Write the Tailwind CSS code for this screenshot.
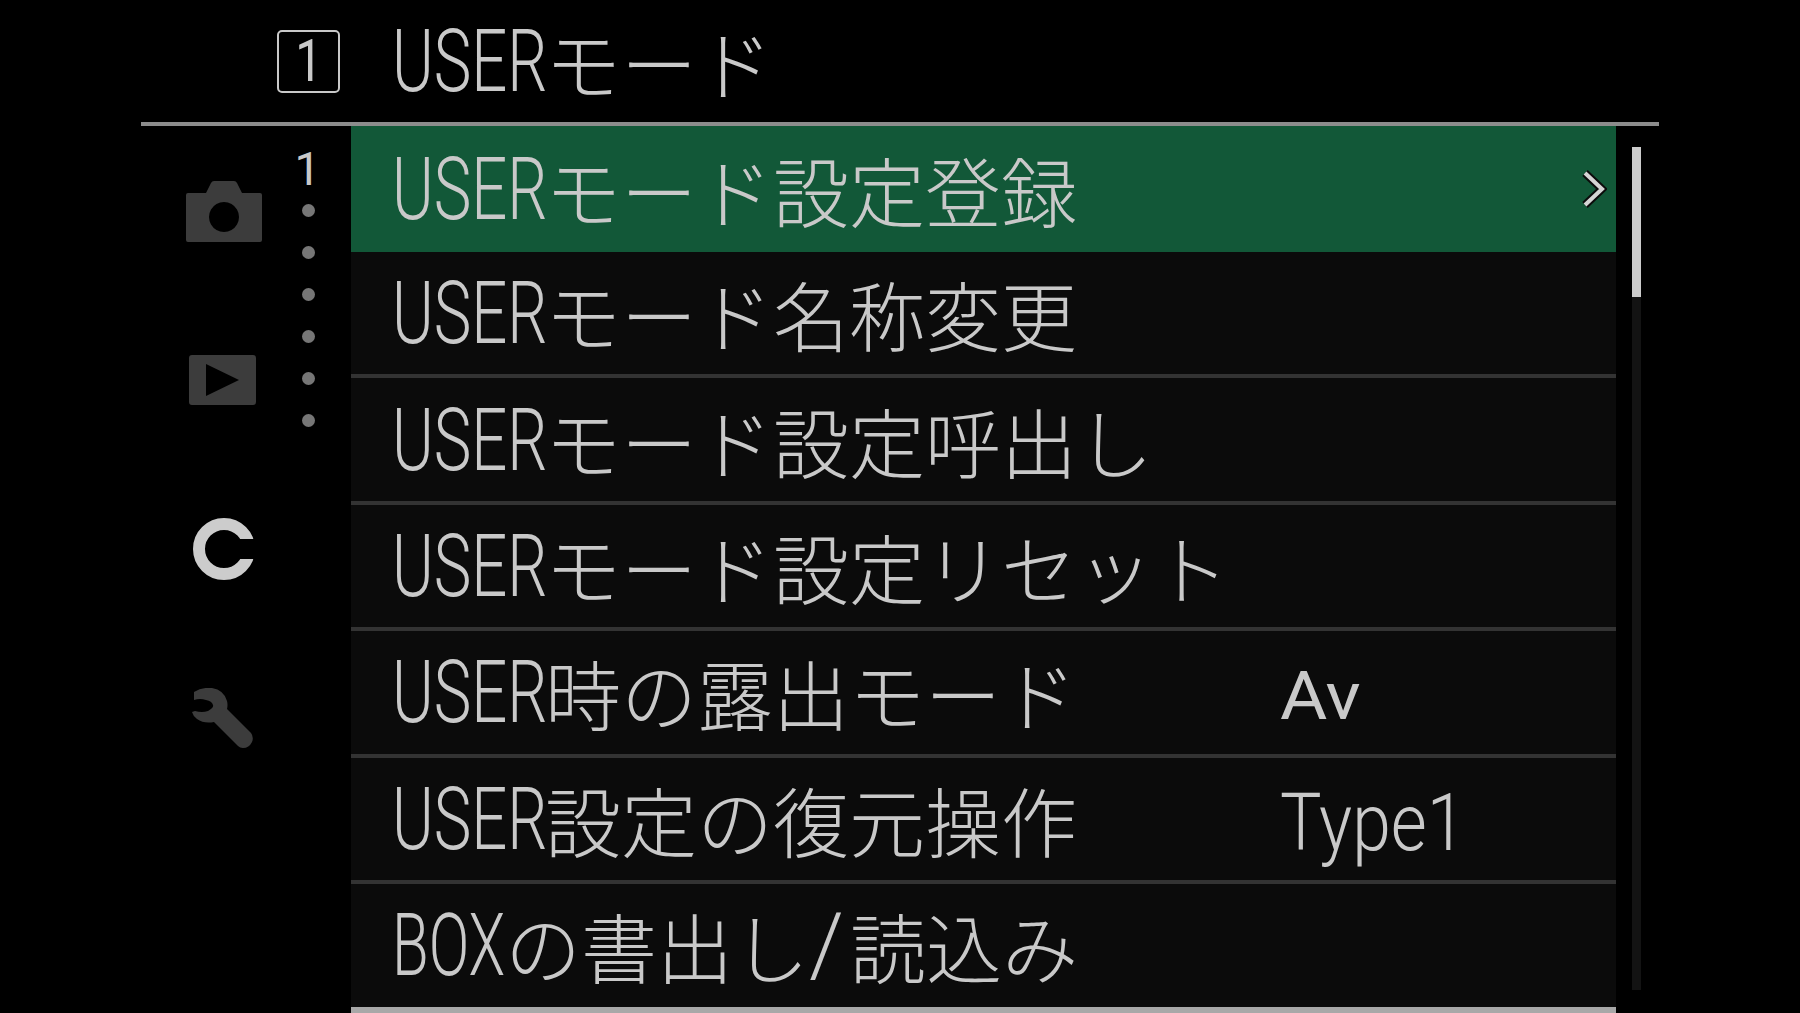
<!DOCTYPE html>
<html lang="ja">
<head>
<meta charset="UTF-8">
<title>USERモード</title>
<script src="https://cdn.jsdelivr.net/npm/@tailwindcss/browser@4"></script>
</head>
<body class="bg-black m-0">
<div class="w-[1800px] h-[1013px] overflow-hidden bg-black text-[#c9c9c9] font-['Noto_Sans_CJK_JP',sans-serif] font-light text-[76px] leading-none">

  <!-- Header -->
  <header class="ml-[141px] w-[1518px] h-[126px] border-b-4 border-[#8c8c8c] flex items-center pl-[136px]">
    <div class="w-[63px] h-[63px] border-2 border-[#c9c9c9] rounded-[5px] flex items-center justify-center font-['Roboto',sans-serif] text-[60px] font-normal">
      <span class="inline-block scale-x-[.8]">1</span>
    </div>
    <div class="ml-[52px] flex items-center">
      <span class="inline-block w-[153px] origin-left scale-x-[.72] font-['Roboto',sans-serif] text-[88px] font-[350]">USER</span><span>モード</span>
    </div>
  </header>

  <div class="flex h-[887px] ml-[141px]">
    <!-- Tabs -->
    <aside class="w-[210px] flex shrink-0">
      <div class="w-[136px] pl-[45px] flex flex-col">
        <div class="h-[169px] flex items-center">
          <svg class="w-[76px] h-[62px]" viewBox="0 0 76 62"><path fill="#3c3c3c" fill-rule="evenodd" d="M2 13h18l5-10q1-2 3-2h20q2 0 3 2l5 10h18q2 0 2 2v45q0 2-2 2H2q-2 0-2-2V15q0-2 2-2zM38 22a15 15 0 1 0 0.01 0z"/></svg>
        </div>
        <div class="h-[169px] flex items-center pl-[3px]">
          <svg class="w-[67px] h-[50px]" viewBox="0 0 67 50"><path fill="#3c3c3c" fill-rule="evenodd" d="M3 0h61q3 0 3 3v44q0 3-3 3H3q-3 0-3-3V3q0-3 3-3zM17 9v32l33-16z"/></svg>
        </div>
        <div class="h-[169px] flex items-center pl-[7px]">
          <svg class="w-[64px] h-[62px]" viewBox="0 0 64 62"><circle cx="31" cy="31" r="25" fill="none" stroke="#cccccc" stroke-width="12"/><rect x="44" y="21" width="20" height="20" fill="#000000"/></svg>
        </div>
        <div class="h-[169px] flex items-center pl-[6px]">
          <svg class="w-[62px] h-[60px]" viewBox="0 0 62 60"><path fill="#3c3c3c" d="M2 4Q10-1 20 0q12 2 15 13 1 4 0 8l24 24q3 4 1 9-3 6-9 6-3 0-5-2L22 34q-10 2-17-3-4-3-5-7l3-1q7 2 13 0 6-3 5-6-1-4-7-5-6-2-12 0z"/></svg>
        </div>
      </div>
      <div class="w-[74px] flex flex-col items-center">
        <div class="h-[58px] pt-[27px] flex items-center font-['Roboto',sans-serif] text-[46px] font-normal -ml-[13px]">1</div>
        <div class="flex flex-col gap-[29px] mt-[20px] -ml-[11px]">
          <div class="w-[13px] h-[13px] rounded-full bg-[#767676]"></div>
          <div class="w-[13px] h-[13px] rounded-full bg-[#767676]"></div>
          <div class="w-[13px] h-[13px] rounded-full bg-[#767676]"></div>
          <div class="w-[13px] h-[13px] rounded-full bg-[#767676]"></div>
          <div class="w-[13px] h-[13px] rounded-full bg-[#767676]"></div>
          <div class="w-[13px] h-[13px] rounded-full bg-[#767676]"></div>
        </div>
      </div>
    </aside>

    <!-- Menu list -->
    <main class="w-[1265px] shrink-0 bg-[#0b0b0b]">
      <div class="h-[126px] bg-[#125838] flex items-center pl-[41px]">
        <span class="inline-block w-[153px] origin-left scale-x-[.72] font-['Roboto',sans-serif] text-[88px] font-[350]">USER</span><span>モード設定登録</span>
        <svg class="ml-auto mr-[9px] w-[26px] h-[40px]" viewBox="0 0 26 40"><path fill="none" stroke="#0b0b0b" stroke-width="8" d="M4 4l17 16L4 36"/><path fill="none" stroke="#d4d4d4" stroke-width="4" d="M4 4l17 16L4 36"/></svg>
      </div>
      <div class="h-[126.400px] border-b-4 border-[#333333] flex items-center pl-[41px]">
        <span class="inline-block w-[153px] origin-left scale-x-[.72] font-['Roboto',sans-serif] text-[88px] font-[350]">USER</span><span>モード名称変更</span>
      </div>
      <div class="h-[126.400px] border-b-4 border-[#333333] flex items-center pl-[41px]">
        <span class="inline-block w-[153px] origin-left scale-x-[.72] font-['Roboto',sans-serif] text-[88px] font-[350]">USER</span><span>モード設定呼出し</span>
      </div>
      <div class="h-[126.400px] border-b-4 border-[#333333] flex items-center pl-[41px]">
        <span class="inline-block w-[153px] origin-left scale-x-[.72] font-['Roboto',sans-serif] text-[88px] font-[350]">USER</span><span>モード設定リセット</span>
      </div>
      <div class="h-[126.400px] border-b-4 border-[#333333] flex items-center pl-[41px]">
        <div class="w-[888px] flex items-center">
          <span class="inline-block w-[153px] origin-left scale-x-[.72] font-['Roboto',sans-serif] text-[88px] font-[350]">USER</span><span>時の露出モード</span>
        </div>
        <span class="pt-[10px] font-['Roboto',sans-serif] text-[66px] font-normal">
          <span class="inline-block origin-left scale-x-[1.1]">Av</span>
        </span>
      </div>
      <div class="h-[126.400px] border-b-4 border-[#333333] flex items-center pl-[41px]">
        <div class="w-[888px] flex items-center">
          <span class="inline-block w-[153px] origin-left scale-x-[.72] font-['Roboto',sans-serif] text-[88px] font-[350]">USER</span><span>設定の復元操作</span>
        </div>
        <span class="pt-[8px] inline-block origin-left scale-x-[.87] font-['Roboto',sans-serif] text-[80px] font-[350]">Type1</span>
      </div>
      <div class="h-[129px] border-b-[6px] border-[#a8a8a8] flex items-center pl-[41px]">
        <span class="inline-block w-[113px] origin-left scale-x-[.68] font-['Roboto',sans-serif] text-[88px] font-[350]">BOX</span><span>の書出し</span><span class="inline-block w-[41px] font-['Roboto',sans-serif] text-[88px]">/</span><span>読込み</span>
      </div>
    </main>

    <!-- Scrollbar -->
    <div class="ml-[16px] mt-[21px] w-[9px] h-[843px] bg-[#131313]">
      <div class="h-[150px] bg-[#cccccc]"></div>
    </div>
  </div>
</div>
</body>
</html>
